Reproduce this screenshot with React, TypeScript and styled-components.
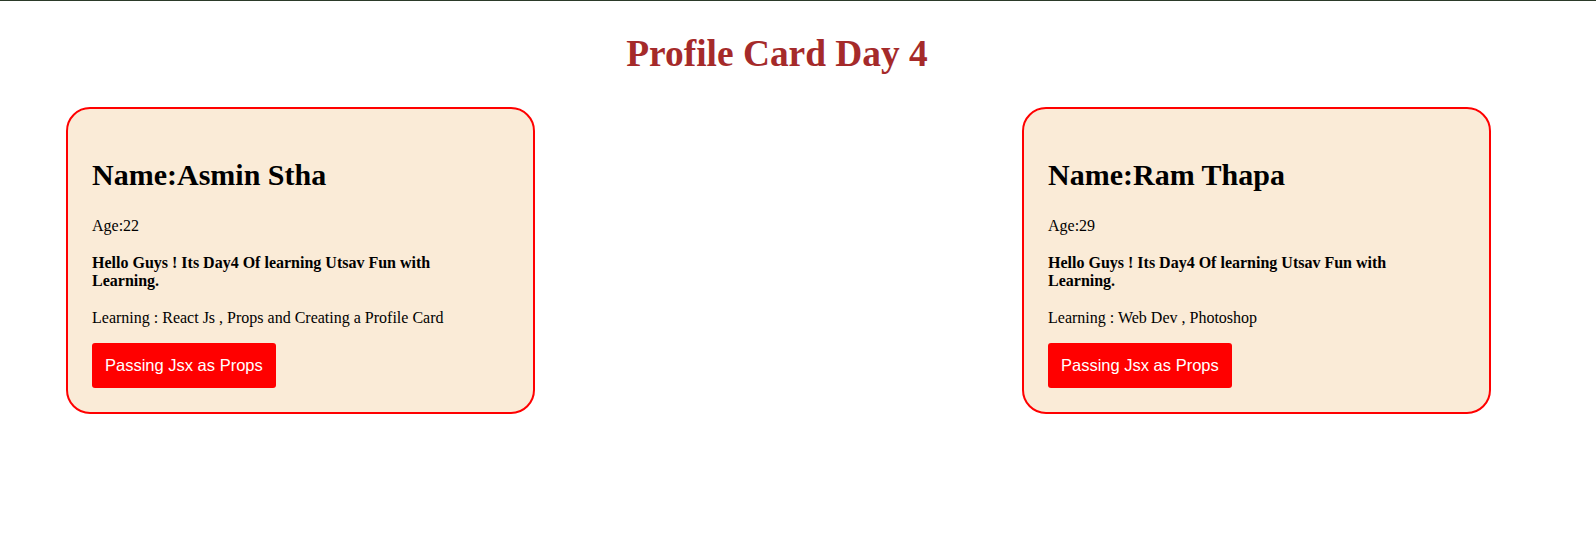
import React from 'react';
import styled, { createGlobalStyle } from 'styled-components';

const GlobalStyle = createGlobalStyle`
  html {
    border-top: 1px solid #2b3a29;
  }
  body {
    margin: 0;
    background: #ffffff;
    font-family: "Liberation Serif", "Times New Roman", serif;
  }
`;

const Page = styled.div`
  width: 1538px;
  padding: 0 8px;
`;

const Title = styled.h1`
  margin: 31px 0 32px;
  text-align: center;
  font-size: 37.4px;
  font-weight: bold;
  color: #a52a2a;
`;

const Row = styled.div`
  display: flex;
  justify-content: space-between;
  align-items: flex-start;
  padding: 0 55px 0 58px;
`;

const Card = styled.div`
  box-sizing: border-box;
  width: 469px;
  padding: 24px;
  border: 2px solid red;
  border-radius: 24px;
  background: #faebd7;
`;

const Name = styled.h2`
  margin: 25px 0;
  font-size: 30px;
  font-weight: bold;
`;

const Text = styled.p<{ $bold?: boolean }>`
  margin: ${(p) => (p.$bold ? '19px 0' : '16px 0')};
  font-size: 16px;
  font-weight: ${(p) => (p.$bold ? 'bold' : 'normal')};
  max-width: ${(p) => (p.$bold ? '390px' : 'none')};
`;

const Button = styled.button`
  display: block;
  padding: 13px 13px;
  border: none;
  border-radius: 3px;
  background: red;
  color: #ffffff;
  font-family: "Liberation Sans", Arial, sans-serif;
  font-size: 16.5px;
  cursor: pointer;
`;

type Profile = {
  name: string;
  age: number;
  learning: string;
};

const profiles: Profile[] = [
  { name: 'Asmin Stha', age: 22, learning: 'React Js , Props and Creating a Profile Card' },
  { name: 'Ram Thapa', age: 29, learning: 'Web Dev , Photoshop' },
];

const ProfileCard = ({ profile, children }: { profile: Profile; children: React.ReactNode }) => (
  <Card>
    <Name>Name:{profile.name}</Name>
    <Text>Age:{profile.age}</Text>
    <Text $bold>Hello Guys ! Its Day4 Of learning Utsav Fun with Learning.</Text>
    <Text>Learning : {profile.learning}</Text>
    {children}
  </Card>
);

export default function App() {
  return (
    <>
      <GlobalStyle />
      <Page>
        <Title>Profile Card Day 4</Title>
        <Row>
          {profiles.map((p) => (
            <ProfileCard key={p.name} profile={p}>
              <Button>Passing Jsx as Props</Button>
            </ProfileCard>
          ))}
        </Row>
      </Page>
    </>
  );
}
